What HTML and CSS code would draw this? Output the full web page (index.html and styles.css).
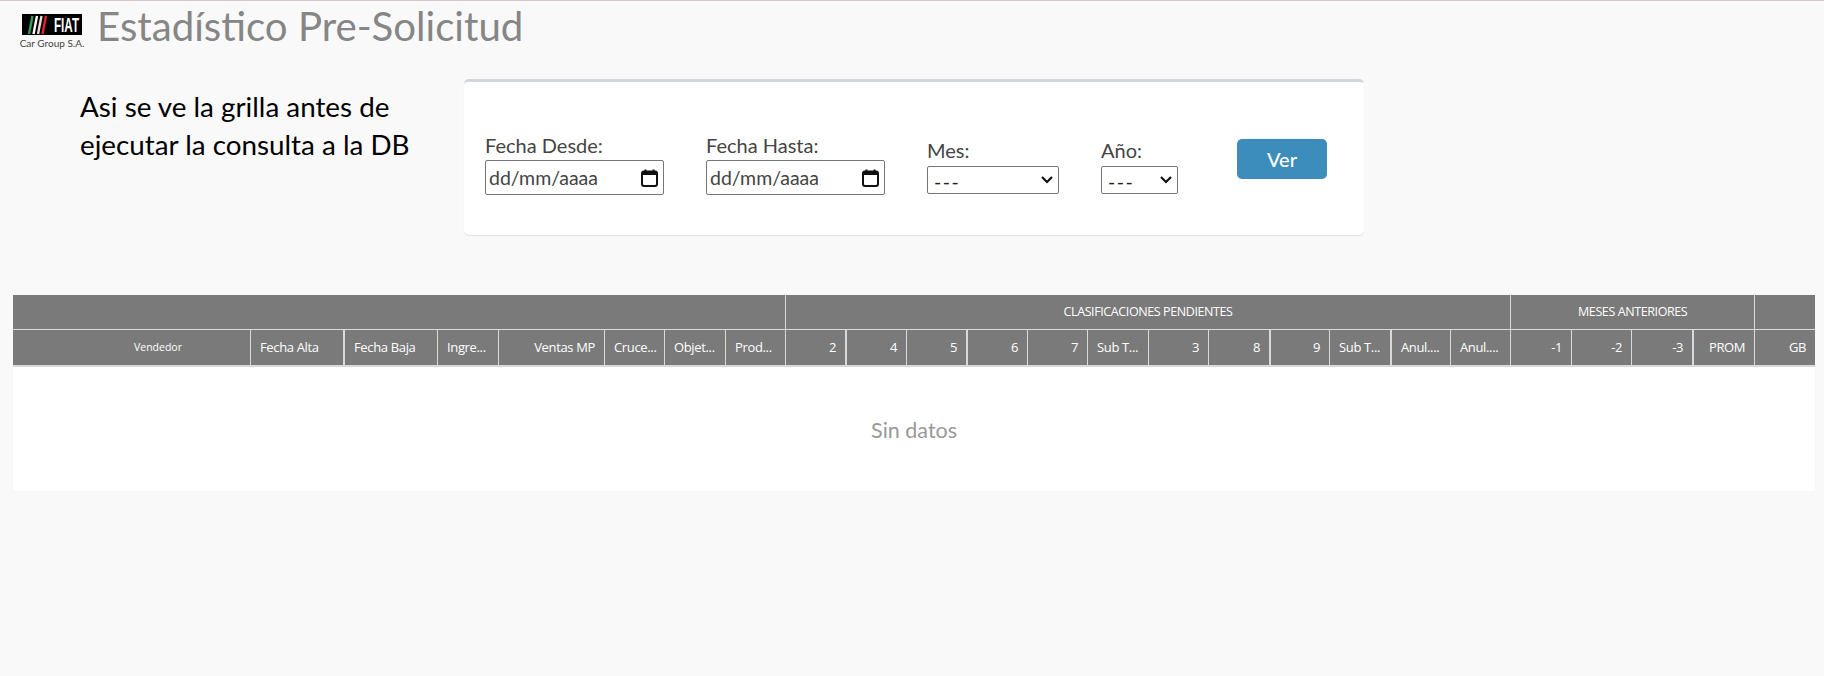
FILE: index.html
```html
<!DOCTYPE html>
<html lang="es">
<head>
  <meta charset="UTF-8">
  <meta name="viewport" content="width=device-width, initial-scale=1.0">
  <title>Estadístico Pre-Solicitud</title>
  <link rel="stylesheet" href="styles.css">
</head>
<body>
  <div class="page-header">
    <div class="brand">
      <svg class="brand-logo" width="60" height="21" viewBox="0 0 60 21">
        <rect width="60" height="21" fill="#000"/>
        <path d="M7 20 L10.5 2" stroke="#2f9e58" stroke-width="2.4"/>
        <path d="M11.5 20 L15 2" stroke="#fff" stroke-width="2.4"/>
        <path d="M16 20 L19.5 2" stroke="#f4d9d9" stroke-width="2.4"/>
        <path d="M20.5 20 L24 2" stroke="#e3262e" stroke-width="2.4"/>
        <text x="32" y="18" textLength="25" lengthAdjust="spacingAndGlyphs" fill="#fff" font-family="Liberation Sans" font-weight="700" font-size="20">FIAT</text>
      </svg>
      <span class="brand-name">Car Group S.A.</span>
    </div>
    <h1 class="page-title">Estadístico Pre-Solicitud</h1>
  </div>

  <div class="filter-row">
    <p class="note">Asi se ve la grilla antes de<br>ejecutar la consulta a la DB</p>

    <div class="card">
      <div class="field">
        <label>Fecha Desde:</label>
        <div class="date-box">
          <span>dd/mm/aaaa</span>
          <svg width="17" height="18" viewBox="0 0 17 18">
            <path d="M4.5 0.5v3M12.5 0.5v3" stroke="#111" stroke-width="2"/>
            <rect x="1" y="2.5" width="15" height="14.5" rx="2" fill="none" stroke="#111" stroke-width="2"/>
            <rect x="1" y="2.5" width="15" height="3.5" fill="#111"/>
          </svg>
        </div>
      </div>
      <div class="field">
        <label>Fecha Hasta:</label>
        <div class="date-box">
          <span>dd/mm/aaaa</span>
          <svg width="17" height="18" viewBox="0 0 17 18">
            <path d="M4.5 0.5v3M12.5 0.5v3" stroke="#111" stroke-width="2"/>
            <rect x="1" y="2.5" width="15" height="14.5" rx="2" fill="none" stroke="#111" stroke-width="2"/>
            <rect x="1" y="2.5" width="15" height="3.5" fill="#111"/>
          </svg>
        </div>
      </div>
      <div class="field select-field">
        <label>Mes:</label>
        <select class="select-month"><option>---</option></select>
      </div>
      <div class="field select-field">
        <label>Año:</label>
        <select class="select-year"><option>---</option></select>
      </div>
      <button class="btn-ver">Ver</button>
    </div>
  </div>

  <div class="grid-wrap">
    <table class="grid">
      <colgroup>
        <col class="w237"><col class="w93"><col class="w94"><col class="w61"><col class="w106"><col class="w60"><col class="w61"><col class="w60">
        <col class="w60"><col class="w61"><col class="w60"><col class="w61"><col class="w60"><col class="w61"><col class="w60"><col class="w61"><col class="w60"><col class="w61"><col class="w60"><col class="w60">
        <col class="w61"><col class="w60"><col class="w61"><col class="w62">
        <col class="w61">
      </colgroup>
      <thead>
        <tr class="group-row">
          <th colspan="8"></th>
          <th colspan="12">CLASIFICACIONES PENDIENTES</th>
          <th colspan="4">MESES ANTERIORES</th>
          <th></th>
        </tr>
        <tr class="title-row">
          <th class="vendedor">Vendedor</th>
          <th>Fecha Alta</th>
          <th class="thick">Fecha Baja</th>
          <th>Ingre...</th>
          <th class="num">Ventas MP</th>
          <th>Cruce...</th>
          <th>Objet...</th>
          <th>Prod...</th>
          <th class="num">2</th>
          <th class="num thick">4</th>
          <th class="num">5</th>
          <th class="num thick">6</th>
          <th class="num">7</th>
          <th>Sub T...</th>
          <th class="num">3</th>
          <th class="num">8</th>
          <th class="num thick">9</th>
          <th>Sub T...</th>
          <th class="thick">Anul....</th>
          <th>Anul....</th>
          <th class="num">-1</th>
          <th class="num">-2</th>
          <th class="num">-3</th>
          <th class="num thick">PROM</th>
          <th class="num">GB</th>
        </tr>
      </thead>
      <tbody>
        <tr>
          <td class="empty" colspan="25">Sin datos</td>
        </tr>
      </tbody>
    </table>
  </div>
</body>
</html>
```

FILE: styles.css
```css
body {
  font-family: Lato, sans-serif;
  margin: 0;
  background-color: #f9f9f9;
  border-top: 1px solid #dcc6cc;
}
.page-header {
  display: flex;
  align-items: flex-start;
  height: 49px;
  padding-left: 20px;
}
.brand {
  display: flex;
  flex-direction: column;
  align-items: center;
  width: 64px;
  padding-top: 13px;
}
.brand-logo {
  display: block;
  overflow: visible;
}
.brand-name {
  font-size: 10px;
  line-height: 13px;
  margin-top: 2px;
  color: #444;
  white-space: nowrap;
}
.page-title {
  margin: 0 0 0 13px;
  font-size: 40.2px;
  line-height: 50px;
  font-weight: 400;
  color: #868686;
}
.filter-row {
  display: flex;
  align-items: flex-start;
  margin-top: 29px;
}
.note {
  width: 384px;
  margin: 9px 0 0 80px;
  font-size: 27.8px;
  line-height: 37.5px;
  color: #000;
}
.card {
  display: flex;
  align-items: flex-end;
  gap: 42px;
  box-sizing: border-box;
  width: 900px;
  height: 156px;
  padding: 0 21px 40px;
  background: #fff;
  border-top: 3px solid #d2d6de;
  border-radius: 5px;
  box-shadow: 0 1px 1px rgba(0, 0, 0, 0.1);
}
.field label {
  display: block;
  font-size: 20px;
  line-height: 30px;
  color: #444;
}
.date-box {
  display: flex;
  align-items: center;
  justify-content: space-between;
  box-sizing: border-box;
  width: 179px;
  height: 35px;
  padding: 0 5px 0 3px;
  border: 1px solid #767676;
  border-radius: 2px;
  font-size: 19.5px;
  color: #444;
}
.select-field {
  margin-bottom: 1px;
}
.select-field label {
  line-height: 31px;
}
select {
  display: block;
  appearance: none;
  height: 28px;
  padding: 2px 0 0 6px;
  border: 1px solid #767676;
  border-radius: 2px;
  font-family: Lato, sans-serif;
  font-size: 19.5px;
  letter-spacing: 1.5px;
  color: #222;
  background: #fff url("data:image/svg+xml,%3Csvg xmlns='http://www.w3.org/2000/svg' width='12' height='8'%3E%3Cpath d='M1 1l5 5 5-5' fill='none' stroke='%23111' stroke-width='2.2'/%3E%3C/svg%3E") no-repeat right 5px center;
}
.select-month {
  width: 132px;
}
.select-year {
  width: 77px;
}
.btn-ver {
  width: 90px;
  height: 40px;
  margin-left: 17px;
  margin-bottom: 16px;
  background-color: #3c8dbc;
  color: white;
  border: none;
  border-radius: 5px;
  font-family: Lato, sans-serif;
  font-size: 20px;
  font-weight: 500;
}
.grid-wrap {
  margin: 60px 0 0 13px;
}
.grid {
  table-layout: fixed;
  width: 1802px;
  border-collapse: separate;
  border-spacing: 0;
  background: #fff;
}
.w237 { width: 237px; }
.w93 { width: 93px; }
.w94 { width: 94px; }
.w60 { width: 60px; }
.w61 { width: 61px; }
.w62 { width: 62px; }
.w106 { width: 106px; }
.grid th {
  box-sizing: border-box;
  padding: 0 9px 1px 9px;
  background-color: #7a7a7a;
  color: #fff;
  font-family: "Open Sans", sans-serif;
  font-size: 13px;
  font-weight: 400;
  letter-spacing: -0.35px;
  text-align: left;
  white-space: nowrap;
  overflow: hidden;
  border-left: 1px solid #d9d9d9;
}
.grid th:first-child {
  border-left: none;
}
.group-row th {
  height: 35px;
  text-align: center;
  font-size: 12.5px;
  letter-spacing: -0.4px;
  border-bottom: 1px solid #d9d9d9;
}
.title-row th {
  height: 37px;
  border-bottom: 2px solid #d9d9d9;
}
.grid .num {
  text-align: right;
}
.grid .thick {
  border-left-width: 2px;
}
.grid .vendedor {
  padding-left: 62px;
  text-align: center;
  font-size: 10.5px;
  letter-spacing: 0;
}
.empty {
  height: 124px;
  padding: 2px 0 0;
  box-sizing: border-box;
  text-align: center;
  font-size: 21.5px;
  color: #999;
}
```
